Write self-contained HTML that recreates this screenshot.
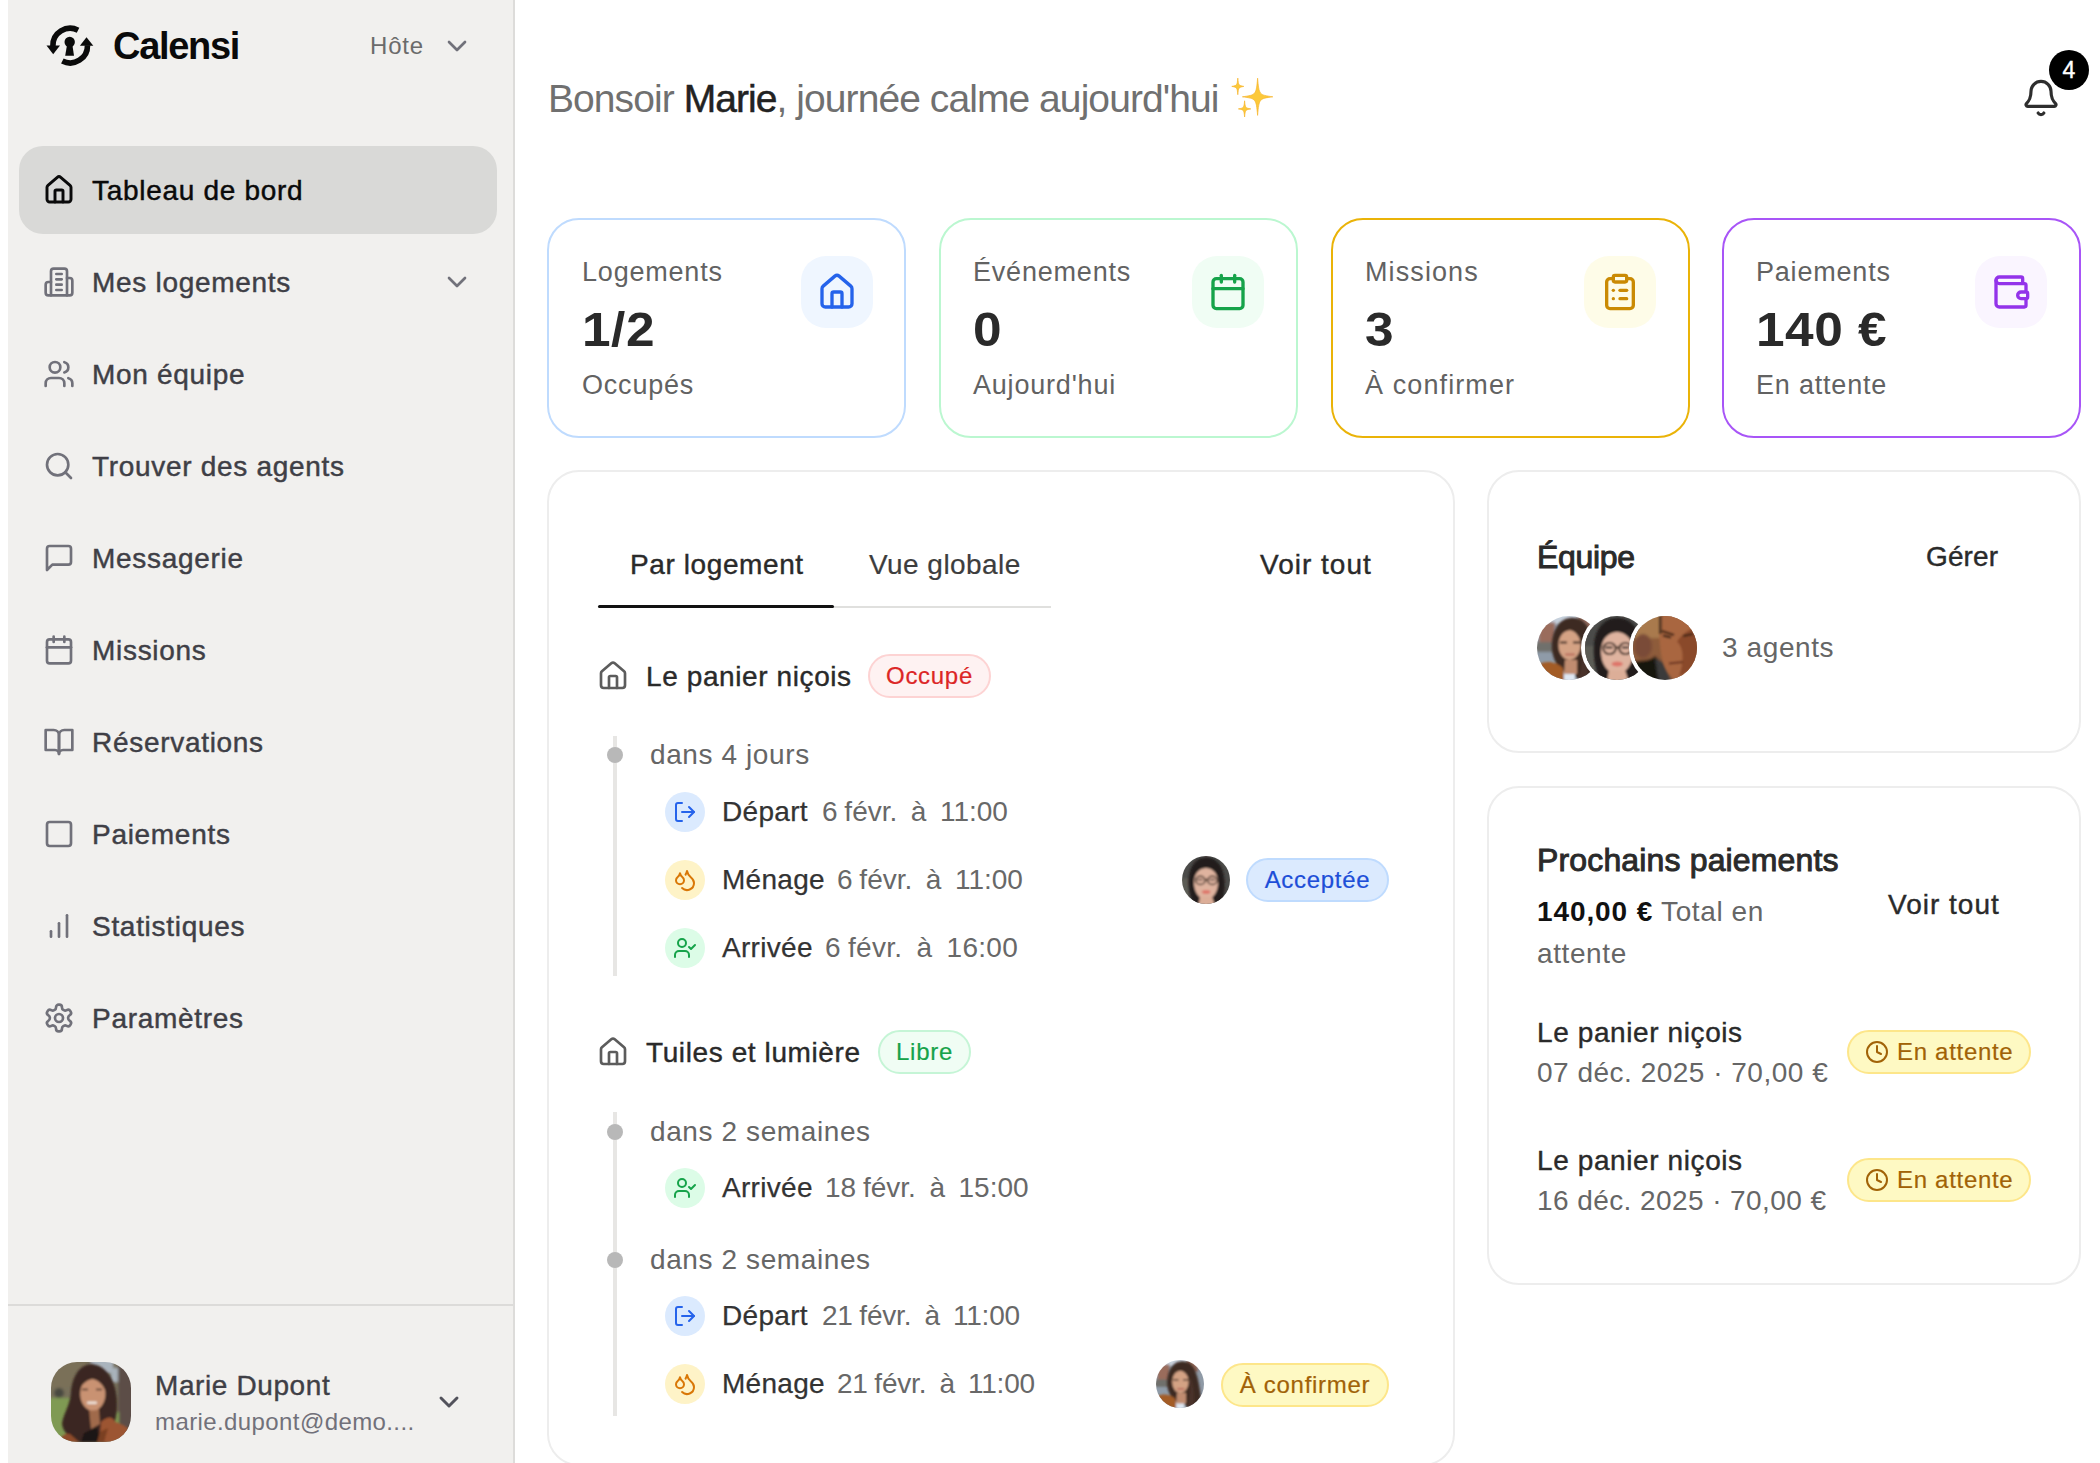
<!DOCTYPE html>
<html lang="fr">
<head>
<meta charset="utf-8">
<title>Calensi</title>
<style>
*{box-sizing:border-box;margin:0;padding:0}
html,body{width:2100px;height:1463px;overflow:hidden;background:#fff}
body{font-family:"Liberation Sans",sans-serif;color:#2b2b2b;position:relative}
.t{position:absolute;white-space:nowrap;line-height:1;transform-origin:0 50%}
.a{position:absolute}
svg{position:absolute;overflow:visible}
.ic{fill:none;stroke-linecap:round;stroke-linejoin:round}
#side{left:8px;top:0;width:507px;height:1463px;background:#f1f0ee;border-right:2px solid #dddcda}
.nav{font-size:28px;color:#3f3f46;left:92px;letter-spacing:.7px;-webkit-text-stroke:.45px currentColor}
.navi{left:43px;width:32px;height:32px;stroke:#71717a;stroke-width:2}
.card{border-radius:32px;border:2px solid #ededed;background:#fff}
.lbl{font-size:27px;color:#626262;letter-spacing:.8px}
.val{font-size:48px;font-weight:bold;color:#2a2a2a;transform:scaleX(1.07);letter-spacing:.5px}
.isq{width:72px;height:72px;border-radius:25px}
.gray{color:#666}
.ev{font-size:28px;color:#333;letter-spacing:.3px;-webkit-text-stroke:.25px currentColor}
.evd{font-size:28px;color:#686868;letter-spacing:0;word-spacing:-1px}
.circ{width:40px;height:40px;border-radius:50%}
.pill{border-radius:22px;height:44px;font-size:24px;letter-spacing:.7px;-webkit-text-stroke:.2px currentColor;line-height:40px;text-align:center;border:2px solid;white-space:nowrap}
.av{border-radius:50%;overflow:hidden}
.tab{font-size:28px;color:#2a2a2a;letter-spacing:.6px;-webkit-text-stroke:.4px currentColor}
.pname{font-size:28px;color:#2a2a2a;letter-spacing:.6px;-webkit-text-stroke:.4px currentColor}
.rel{font-size:28px;color:#666;letter-spacing:.6px}
.h2{font-size:32px;font-weight:normal;color:#2a2a2a;letter-spacing:.15px;-webkit-text-stroke:.95px #2a2a2a}
</style>
</head>
<body>
<!-- AVDEFS-START -->
<svg width="0" height="0" style="position:absolute">
<defs>
  <filter id="bl1" x="-10%" y="-10%" width="120%" height="120%"><feGaussianBlur stdDeviation="1.1"/></filter>
  <filter id="bl2" x="-10%" y="-10%" width="120%" height="120%"><feGaussianBlur stdDeviation="1.6"/></filter>
  <!-- Marie (80x80) -->
  <symbol id="avM" viewBox="0 0 80 80">
    <g filter="url(#bl2)">
      <rect x="-5" y="-5" width="90" height="90" fill="#77705a"/>
      <rect x="-5" y="-5" width="40" height="30" fill="#7a6f58"/>
      <rect x="40" y="-5" width="22" height="16" fill="#aab4bd"/>
      <rect x="60" y="6" width="9" height="14" fill="#a9b3bb"/>
      <rect x="67" y="-5" width="18" height="80" fill="#5b4e47"/>
      <rect x="-5" y="36" width="40" height="40" fill="#7f9a52"/>
      <rect x="60" y="50" width="8" height="18" fill="#7f9a52"/>
      <circle cx="8" cy="31" r="5" fill="#48483f"/>
    </g>
    <g filter="url(#bl1)">
      <path d="M41 2 C28 2 21 16 20 30 C19 44 12 52 11 62 C12 68 15 72 19 74 L28 80 L58 80 C62 66 66 56 66 44 C67 28 60 4 41 2Z" fill="#3b2720"/>
      <path d="M8 80 C10 74 14 71 19 72 L28 80Z" fill="#8f4b2b"/>
      <path d="M38 47 L48 47 L49 62 L40 67Z" fill="#a06a4c"/>
      <ellipse cx="41.8" cy="32" rx="12.6" ry="16.5" fill="#c99272"/>
      <path d="M29 26 C30 14 40 10 46 12 C52 14 56 22 55 30 C52 22 46 17 41 17 C36 18 31 22 29 26Z" fill="#3b2720"/>
      <rect x="36" y="39.4" width="10" height="2.6" rx="1.2" fill="#efe3da"/>
      <path d="M31 27.5h6M45 27.5h6" stroke="#4a3127" stroke-width="1.6"/>
      <path d="M30 80 L33 71 L46 65 L49 80Z" fill="#1c1918"/>
      <path d="M48 80 L50 60 C56 54 62 54 64 60 C72 62 78 66 82 72 L82 82Z" fill="#9c5532"/>
      <path d="M49 70 L57 66 L53 80 L46 80Z" fill="#7a3f22"/>
    </g>
  </symbol>
  <!-- agent A: woman, street background (64x64) -->
  <symbol id="avA" viewBox="0 0 64 64">
    <g filter="url(#bl2)">
      <rect x="-4" y="-4" width="72" height="72" fill="#8f9aa6"/>
      <rect x="-4" y="-4" width="72" height="12" fill="#c6d0dc"/>
      <rect x="2" y="6" width="16" height="22" fill="#9a6c5c"/>
      <rect x="40" y="0" width="16" height="16" fill="#8c6658"/>
      <rect x="-4" y="26" width="22" height="12" fill="#6f706c"/>
      <rect x="-4" y="36" width="26" height="16" fill="#8f9ba8"/>
    </g>
    <g filter="url(#bl1)">
      <path d="M33 2 C22 3 16 14 15 26 C14 36 17 44 21 50 L30 58 L52 66 L60 50 C58 36 56 20 50 10 C46 4 40 1 33 2Z" fill="#3d2b24"/>
      <path d="M2 48 C10 44 20 46 26 52 L27 66 L2 66Z" fill="#a35c28"/>
      <rect x="27" y="56" width="11" height="10" fill="#dfe8f3"/>
      <path d="M28 44 L40 44 L40 58 L27 58Z" fill="#c08c6f"/>
      <ellipse cx="32.5" cy="29" rx="11" ry="15" fill="#d4a284"/>
      <path d="M21 22 C23 10 34 8 40 10 C46 13 47 22 46 30 C43 20 38 15 33 14 C28 15 23 18 21 22Z" fill="#3d2b24"/>
      <path d="M23 26.500h7M36 26.500h7" stroke="#3c2a23" stroke-width="1.8"/>
      <path d="M29 38.500h8" stroke="#b86a5c" stroke-width="2.2" stroke-linecap="round"/>
      <path d="M44 22 C50 30 52 44 50 66 L40 66 C46 52 46 36 44 22Z" fill="#4a3329"/>
    </g>
  </symbol>
  <!-- agent B: glasses, dark background -->
  <symbol id="avB" viewBox="0 0 64 64">
    <g filter="url(#bl2)">
      <rect x="-4" y="-4" width="72" height="72" fill="#4b4b49"/>
      <rect x="-4" y="30" width="14" height="38" fill="#5c5b55"/>
    </g>
    <g filter="url(#bl1)">
      <path d="M32 2 C18 2 10 14 9 30 C8 44 12 56 16 66 L52 66 C56 54 58 42 56 28 C54 12 46 2 32 2Z" fill="#211d1c"/>
      <ellipse cx="32" cy="36" rx="16" ry="22" fill="#dfb39f"/>
      <path d="M15 32 C16 14 25 8 32 8 C40 8 48 14 49 32 C46 21 39 16 32 16 C25 16 18 21 15 32Z" fill="#211d1c"/>
      <path d="M22 66 L24 54 L40 54 L44 66Z" fill="#dcae98"/>
      <g fill="none" stroke="#3a2b22" stroke-width="1.9">
        <ellipse cx="24.500" cy="32.500" rx="6.200" ry="5.600"/>
        <ellipse cx="40.500" cy="32.500" rx="6.200" ry="5.600"/>
        <path d="M30.700 31.500h3.600"/>
      </g>
      <path d="M20.500 31.500h7M37 31.500h7" stroke="#2a2220" stroke-width="1.8"/>
      <ellipse cx="32.200" cy="48" rx="5.600" ry="2.600" fill="#de7469"/>
    </g>
  </symbol>
  <!-- agent C: man, brown -->
  <symbol id="avC" viewBox="0 0 64 64">
    <g filter="url(#bl2)">
      <rect x="-4" y="-4" width="72" height="72" fill="#8e5c3b"/>
      <rect x="-4" y="-4" width="32" height="26" fill="#a97a4e"/>
      <ellipse cx="10" cy="30" rx="9" ry="12" fill="#7a4c38"/>
      <path d="M-4 46 C6 44 16 46 22 40 L30 48 L36 68 L-4 68Z" fill="#18120f"/>
      <path d="M22 42 L30 46 L40 68 L26 68Z" fill="#3a3a3a"/>
    </g>
    <g filter="url(#bl1)">
      <path d="M26 -2 L66 -2 L66 50 C60 60 52 66 42 64 C34 58 30 48 28 38 C26 24 26 10 26 -2Z" fill="#a9663f"/>
      <path d="M44 26 C50 30 52 44 46 60 C54 58 62 50 66 40 L66 10 C58 12 48 18 44 26Z" fill="#8a4a2c"/>
      <path d="M29 15 L41 19" stroke="#3b2216" stroke-width="2.2"/>
      <path d="M30 19.500 L38 21.500" stroke="#2a1a14" stroke-width="2"/>
      <path d="M50 20 L60 18" stroke="#3b2216" stroke-width="2.200"/>
      <path d="M36 47.500 L50 46" stroke="#6a3320" stroke-width="1.800"/>
      <rect x="26" y="-2" width="3" height="20" fill="#5a3a28"/>
    </g>
  </symbol>
  <clipPath id="cp64"><circle cx="32" cy="32" r="32"/></clipPath>
</defs>
</svg>
<!-- AVDEFS-END -->
<div id="side" class="a"></div>
<!-- SIDEBAR-START -->
<!-- logo -->
<svg class="a" style="left:35px;top:10px;width:70px;height:70px" viewBox="35 10 70 70">
  <g fill="none" stroke="#0a0a0a" stroke-width="5.6" stroke-linecap="butt">
    <path d="M52.9 46 A17.3 17.3 0 0 1 78.05 30.2"/>
    <path d="M87.5 45.2 A17.3 17.3 0 0 1 62.35 61"/>
  </g>
  <path d="M46.5 45.6 L60 45.6 L53.2 54.2 Z" fill="#0a0a0a"/>
  <path d="M79.9 45.8 L93.3 45.8 L86.5 37.3 Z" fill="#0a0a0a"/>
  <circle cx="69.7" cy="42" r="5.2" fill="#0a0a0a"/>
  <path d="M67 45 L72.4 45 L74 55.8 L65.2 55.8 Z" fill="#0a0a0a"/>
</svg>
<div class="t" id="brand" style="left:113px;top:26.7px;font-size:38px;font-weight:bold;color:#0a0a0a;letter-spacing:-1.3px">Calensi</div>
<div class="t" id="hote" style="left:370px;top:34px;font-size:24px;color:#6b6b6b;letter-spacing:.8px">Hôte</div>
<svg class="ic" style="left:441px;top:30px;width:32px;height:32px;stroke:#71717a;stroke-width:2" viewBox="0 0 24 24"><path d="m6 9 6 6 6-6"/></svg>

<div class="a" style="left:19px;top:146px;width:478px;height:88px;border-radius:24px;background:#d9d9d7"></div>
<svg class="ic navi" style="top:174px;stroke:#0a0a0a;stroke-width:2.2" viewBox="0 0 24 24"><path d="M15 21v-8a1 1 0 0 0-1-1h-4a1 1 0 0 0-1 1v8"/><path d="M3 10a2 2 0 0 1 .709-1.528l7-5.999a2 2 0 0 1 2.582 0l7 5.999A2 2 0 0 1 21 10v9a2 2 0 0 1-2 2H5a2 2 0 0 1-2-2z"/></svg>
<div class="t nav" id="n1" style="top:177px;color:#0a0a0a">Tableau de bord</div>

<svg class="ic navi" style="top:266px" viewBox="0 0 24 24"><path d="M6 22V4a2 2 0 0 1 2-2h8a2 2 0 0 1 2 2v18Z"/><path d="M6 12H4a2 2 0 0 0-2 2v6a2 2 0 0 0 2 2h2"/><path d="M18 9h2a2 2 0 0 1 2 2v9a2 2 0 0 1-2 2h-2"/><path d="M10 6h4"/><path d="M10 10h4"/><path d="M10 14h4"/><path d="M10 18h4"/></svg>
<div class="t nav" id="n2" style="top:269px">Mes logements</div>
<svg class="ic" style="left:441px;top:266px;width:32px;height:32px;stroke:#71717a;stroke-width:2" viewBox="0 0 24 24"><path d="m6 9 6 6 6-6"/></svg>

<svg class="ic navi" style="top:358px" viewBox="0 0 24 24"><path d="M16 21v-2a4 4 0 0 0-4-4H6a4 4 0 0 0-4 4v2"/><circle cx="9" cy="7" r="4"/><path d="M22 21v-2a4 4 0 0 0-3-3.87"/><path d="M16 3.13a4 4 0 0 1 0 7.75"/></svg>
<div class="t nav" id="n3" style="top:361px">Mon équipe</div>

<svg class="ic navi" style="top:450px" viewBox="0 0 24 24"><circle cx="11" cy="11" r="8"/><path d="m21 21-4.3-4.3"/></svg>
<div class="t nav" id="n4" style="top:453px">Trouver des agents</div>

<svg class="ic navi" style="top:542px" viewBox="0 0 24 24"><path d="M21 15a2 2 0 0 1-2 2H7l-4 4V5a2 2 0 0 1 2-2h14a2 2 0 0 1 2 2z"/></svg>
<div class="t nav" id="n5" style="top:545px">Messagerie</div>

<svg class="ic navi" style="top:634px" viewBox="0 0 24 24"><path d="M8 2v4"/><path d="M16 2v4"/><rect width="18" height="18" x="3" y="4" rx="2"/><path d="M3 10h18"/></svg>
<div class="t nav" id="n6" style="top:637px">Missions</div>

<svg class="ic navi" style="top:726px" viewBox="0 0 24 24"><path d="M2 3h6a4 4 0 0 1 4 4v14a3 3 0 0 0-3-3H2z"/><path d="M22 3h-6a4 4 0 0 0-4 4v14a3 3 0 0 1 3-3h7z"/></svg>
<div class="t nav" id="n7" style="top:729px">Réservations</div>

<svg class="ic navi" style="top:818px" viewBox="0 0 24 24"><rect width="18" height="18" x="3" y="3" rx="2"/></svg>
<div class="t nav" id="n8" style="top:821px">Paiements</div>

<svg class="ic navi" style="top:910px" viewBox="0 0 24 24"><path d="M12 20V10"/><path d="M18 20V4"/><path d="M6 20v-4"/></svg>
<div class="t nav" id="n9" style="top:913px">Statistiques</div>

<svg class="ic navi" style="top:1002px" viewBox="0 0 24 24"><path d="M12.22 2h-.44a2 2 0 0 0-2 2v.18a2 2 0 0 1-1 1.73l-.43.25a2 2 0 0 1-2 0l-.15-.08a2 2 0 0 0-2.73.73l-.22.38a2 2 0 0 0 .73 2.73l.15.1a2 2 0 0 1 1 1.72v.51a2 2 0 0 1-1 1.74l-.15.09a2 2 0 0 0-.73 2.73l.22.38a2 2 0 0 0 2.73.73l.15-.08a2 2 0 0 1 2 0l.43.25a2 2 0 0 1 1 1.73V20a2 2 0 0 0 2 2h.44a2 2 0 0 0 2-2v-.18a2 2 0 0 1 1-1.73l.43-.25a2 2 0 0 1 2 0l.15.08a2 2 0 0 0 2.73-.73l.22-.39a2 2 0 0 0-.73-2.73l-.15-.08a2 2 0 0 1-1-1.74v-.5a2 2 0 0 1 1-1.74l.15-.09a2 2 0 0 0 .73-2.73l-.22-.38a2 2 0 0 0-2.73-.73l-.15.08a2 2 0 0 1-2 0l-.43-.25a2 2 0 0 1-1-1.73V4a2 2 0 0 0-2-2z"/><circle cx="12" cy="12" r="3"/></svg>
<div class="t nav" id="n10" style="top:1005px">Paramètres</div>

<div class="a" style="left:8px;top:1304px;width:505px;height:2px;background:#dcdbd9"></div>
<!-- user avatar -->
<div class="a" style="left:51px;top:1362px;width:80px;height:80px;border-radius:26px;overflow:hidden"><svg style="left:0;top:0;width:80px;height:80px"><use href="#avM"/></svg></div>
<div class="t" id="uname" style="left:155px;top:1372px;font-size:28px;color:#3f3f46;letter-spacing:.6px;-webkit-text-stroke:.4px currentColor">Marie Dupont</div>
<div class="t" id="umail" style="left:155px;top:1410px;font-size:24px;color:#71717a;letter-spacing:.4px">marie.dupont@demo....</div>
<svg class="ic" style="left:433px;top:1386px;width:32px;height:32px;stroke:#52525b;stroke-width:2.2" viewBox="0 0 24 24"><path d="m6 9 6 6 6-6"/></svg>
<!-- SIDEBAR-END -->
<!-- MAIN1-START -->
<!-- greeting -->
<div class="t" id="greet" style="left:548px;top:79px;font-size:39px;color:#707070;letter-spacing:-.93px">Bonsoir <span style="color:#222;-webkit-text-stroke:.5px #222">Marie</span>, journée calme aujourd'hui</div>
<svg class="a" aria-label="sparkles" style="left:1225px;top:70px;width:55px;height:55px" viewBox="1225 70 55 55"><path d="M1257.6 78.2 C1259.1 94.9 1259.1 94.9 1272.8 96.8 C1259.1 98.7 1259.1 98.7 1257.6 115.4 C1256.1 98.7 1256.1 98.7 1242.4 96.8 C1256.1 94.9 1256.1 94.9 1257.6 78.2Z" fill="#fcc93a" stroke="#f7b52c" stroke-width=".7" stroke-linejoin="round"/><path d="M1237.8 78.1 C1238.5 85.4 1238.5 85.4 1243.8 86.4 C1238.5 87.4 1238.5 87.4 1237.8 94.7 C1237.1 87.4 1237.1 87.4 1231.8 86.4 C1237.1 85.4 1237.1 85.4 1237.8 78.1Z" fill="#fcc93a" stroke="#f7b52c" stroke-width=".7" stroke-linejoin="round"/><path d="M1244.6 100.8 C1245.3 107.9 1245.3 107.9 1250.8 108.9 C1245.3 109.9 1245.3 109.9 1244.6 117.0 C1243.9 109.9 1243.9 109.9 1238.4 108.9 C1243.9 107.9 1243.9 107.9 1244.6 100.8Z" fill="#fcc93a" stroke="#f7b52c" stroke-width=".7" stroke-linejoin="round"/></svg>
<!-- bell -->
<svg class="ic" style="left:2021px;top:78px;width:40px;height:40px;stroke:#2e2e2e;stroke-width:1.9" viewBox="0 0 24 24"><path d="M10.268 21a2 2 0 0 0 3.464 0"/><path d="M3.262 15.326A1 1 0 0 0 4 17h16a1 1 0 0 0 .74-1.673C19.41 13.956 18 12.499 18 8A6 6 0 0 0 6 8c0 4.499-1.411 5.956-2.738 7.326"/></svg>
<div class="a" style="left:2049px;top:50px;width:40px;height:40px;border-radius:50%;background:#000"></div>
<div class="t" id="badge4" style="left:2049px;top:59px;width:40px;text-align:center;font-size:23px;-webkit-text-stroke:.4px #fff;color:#fff">4</div>

<!-- stat cards -->
<div class="a card" style="left:547px;top:218px;width:359px;height:220px;border-color:#bfdbfe"></div>
<div class="t lbl" id="s1l" style="left:582px;top:259px">Logements</div>
<div class="t val" id="s1v" style="left:582px;top:306px">1/2</div>
<div class="t lbl" id="s1s" style="left:582px;top:372px">Occupés</div>
<div class="a isq" style="left:801px;top:256px;background:#eff6ff"></div>
<svg class="ic" style="left:817px;top:272px;width:40px;height:40px;stroke:#2563eb;stroke-width:2" viewBox="0 0 24 24"><path d="M15 21v-8a1 1 0 0 0-1-1h-4a1 1 0 0 0-1 1v8"/><path d="M3 10a2 2 0 0 1 .709-1.528l7-5.999a2 2 0 0 1 2.582 0l7 5.999A2 2 0 0 1 21 10v9a2 2 0 0 1-2 2H5a2 2 0 0 1-2-2z"/></svg>

<div class="a card" style="left:939px;top:218px;width:359px;height:220px;border-color:#bbf7d0"></div>
<div class="t lbl" id="s2l" style="left:973px;top:259px">Événements</div>
<div class="t val" id="s2v" style="left:973px;top:306px">0</div>
<div class="t lbl" id="s2s" style="left:973px;top:372px">Aujourd'hui</div>
<div class="a isq" style="left:1192px;top:256px;background:#f0fdf4"></div>
<svg class="ic" style="left:1208px;top:272px;width:40px;height:40px;stroke:#16a34a;stroke-width:2" viewBox="0 0 24 24"><path d="M8 2v4"/><path d="M16 2v4"/><rect width="18" height="18" x="3" y="4" rx="2"/><path d="M3 10h18"/></svg>

<div class="a card" style="left:1331px;top:218px;width:359px;height:220px;border-color:#eab308"></div>
<div class="t lbl" id="s3l" style="letter-spacing:1.1px;left:1365px;top:259px">Missions</div>
<div class="t val" id="s3v" style="left:1365px;top:306px">3</div>
<div class="t lbl" id="s3s" style="letter-spacing:1.1px;left:1365px;top:372px">À confirmer</div>
<div class="a isq" style="left:1584px;top:256px;background:#fefce8"></div>
<svg class="ic" style="left:1600px;top:272px;width:40px;height:40px;stroke:#ca8a04;stroke-width:2" viewBox="0 0 24 24"><rect width="8" height="4" x="8" y="2" rx="1" ry="1"/><path d="M16 4h2a2 2 0 0 1 2 2v14a2 2 0 0 1-2 2H6a2 2 0 0 1-2-2V6a2 2 0 0 1 2-2h2"/><path d="M12 11h4"/><path d="M12 16h4"/><path d="M8 11h.01"/><path d="M8 16h.01"/></svg>

<div class="a card" style="left:1722px;top:218px;width:359px;height:220px;border-color:#a855f7"></div>
<div class="t lbl" id="s4l" style="left:1756px;top:259px">Paiements</div>
<div class="t val" id="s4v" style="left:1756px;top:306px">140 €</div>
<div class="t lbl" id="s4s" style="left:1756px;top:372px">En attente</div>
<div class="a isq" style="left:1975px;top:256px;background:#faf5ff"></div>
<svg class="ic" style="left:1991px;top:272px;width:40px;height:40px;stroke:#9333ea;stroke-width:2" viewBox="0 0 24 24"><path d="M19 7V4a1 1 0 0 0-1-1H5a2 2 0 0 0 0 4h15a1 1 0 0 1 1 1v4h-3a2 2 0 0 0 0 4h3a1 1 0 0 0 1-1v-2a1 1 0 0 0-1-1"/><path d="M3 5v14a2 2 0 0 0 2 2h15a1 1 0 0 0 1-1v-4"/></svg>
<!-- MAIN1-END -->
<!-- MAIN2-START -->
<div class="a card" style="left:547px;top:470px;width:908px;height:996px"></div>
<div class="t tab" id="tab1" style="left:630px;top:551.3px">Par logement</div>
<div class="t tab" id="tab2" style="color:#3d3d3d;-webkit-text-stroke:.2px #3d3d3d;letter-spacing:.45px;left:869px;top:551.3px">Vue globale</div>
<div class="a" style="left:598px;top:606px;width:453px;height:2px;background:#e0e0de"></div>
<div class="a" style="left:598px;top:605px;width:236px;height:3px;background:#111;border-radius:2px"></div>
<div class="t tab" id="voir1" style="letter-spacing:1px;left:1260px;top:551.3px">Voir tout</div>
<svg class="ic" style="left:597px;top:660px;width:32px;height:32px;stroke:#5c5c5c;stroke-width:2" viewBox="0 0 24 24"><path d="M15 21v-8a1 1 0 0 0-1-1h-4a1 1 0 0 0-1 1v8"/><path d="M3 10a2 2 0 0 1 .709-1.528l7-5.999a2 2 0 0 1 2.582 0l7 5.999A2 2 0 0 1 21 10v9a2 2 0 0 1-2 2H5a2 2 0 0 1-2-2z"/></svg>
<div class="t pname" id="p1" style="left:646px;top:662.8px">Le panier niçois</div>
<div class="a pill" id="b1" style="left:868px;top:654px;width:123px;color:#dc2626;background:#fef2f2;border-color:#fdd3d3">Occupé</div>
<div class="a" style="left:613px;top:736px;width:4px;height:240px;background:#e7e6e4"></div>
<div class="a" style="left:607px;top:747px;width:16px;height:16px;border-radius:50%;background:#b8b8b8"></div>
<div class="t rel" id="r1" style="left:650px;top:741.3px">dans 4 jours</div>
<div class="a circ" style="left:665px;top:792px;background:#dbeafe"></div>
<svg class="ic" style="left:673px;top:800px;width:24px;height:24px;stroke:#2563eb;stroke-width:2" viewBox="0 0 24 24"><path d="M9 21H5a2 2 0 0 1-2-2V5a2 2 0 0 1 2-2h4"/><polyline points="16 17 21 12 16 7"/><line x1="21" x2="9" y1="12" y2="12"/></svg>
<div class="t ev" id="e1l" style="left:722px;top:798.3px">Départ</div>
<div class="t evd" id="e1d" style="left:822px;top:798.3px;letter-spacing:0px">6 févr.&nbsp; à&nbsp; 11:00</div>
<div class="a circ" style="left:665px;top:860px;background:#fef3c7"></div>
<svg class="ic" style="left:673px;top:868px;width:24px;height:24px;stroke:#d97706;stroke-width:2" viewBox="0 0 24 24"><path d="M7 16.3c2.2 0 4-1.83 4-4.05 0-1.16-.57-2.26-1.71-3.19S7.29 6.75 7 5.3c-.29 1.45-1.14 2.84-2.29 3.76S3 11.1 3 12.25c0 2.22 1.8 4.05 4 4.05z"/><path d="M12.56 6.6A10.97 10.97 0 0 0 14 3.02c.5 2.5 2 4.9 4 6.5s3 3.500 3 5.5a6.98 6.98 0 0 1-11.91 4.97"/></svg>
<div class="t ev" id="e2l" style="left:722px;top:866.3px">Ménage</div>
<div class="t evd" id="e2d" style="left:837px;top:866.3px;letter-spacing:0px">6 févr.&nbsp; à&nbsp; 11:00</div>
<div class="a circ" style="left:665px;top:928px;background:#dcfce7"></div>
<svg class="ic" style="left:673px;top:936px;width:24px;height:24px;stroke:#16a34a;stroke-width:2" viewBox="0 0 24 24"><path d="M16 21v-2a4 4 0 0 0-4-4H6a4 4 0 0 0-4 4v2"/><circle cx="9" cy="7" r="4"/><polyline points="16 11 18 13 22 9"/></svg>
<div class="t ev" id="e3l" style="left:722px;top:934.3px">Arrivée</div>
<div class="t evd" id="e3d" style="left:825px;top:934.3px;letter-spacing:.3px">6 févr.&nbsp; à&nbsp; 16:00</div>
<div class="a av" style="left:1182px;top:856px;width:48px;height:48px;"><svg style="left:0;top:0;width:48px;height:48px"><use href="#avB"/></svg></div>
<div class="a pill" id="b2" style="left:1246px;top:858px;width:143px;color:#1d4ed8;background:#dbeafe;border-color:#bfdbfe">Acceptée</div>
<svg class="ic" style="left:597px;top:1036px;width:32px;height:32px;stroke:#5c5c5c;stroke-width:2" viewBox="0 0 24 24"><path d="M15 21v-8a1 1 0 0 0-1-1h-4a1 1 0 0 0-1 1v8"/><path d="M3 10a2 2 0 0 1 .709-1.528l7-5.999a2 2 0 0 1 2.582 0l7 5.999A2 2 0 0 1 21 10v9a2 2 0 0 1-2 2H5a2 2 0 0 1-2-2z"/></svg>
<div class="t pname" id="p2" style="left:646px;top:1038.8px">Tuiles et lumière</div>
<div class="a pill" id="b3" style="left:878px;top:1030px;width:93px;color:#16a34a;background:#f0fdf4;border-color:#c5f5d6">Libre</div>
<div class="a" style="left:613px;top:1112px;width:4px;height:304px;background:#e7e6e4"></div>
<div class="a" style="left:607px;top:1124px;width:16px;height:16px;border-radius:50%;background:#b8b8b8"></div>
<div class="t rel" id="r2" style="left:650px;top:1118.3px">dans 2 semaines</div>
<div class="a circ" style="left:665px;top:1168px;background:#dcfce7"></div>
<svg class="ic" style="left:673px;top:1176px;width:24px;height:24px;stroke:#16a34a;stroke-width:2" viewBox="0 0 24 24"><path d="M16 21v-2a4 4 0 0 0-4-4H6a4 4 0 0 0-4 4v2"/><circle cx="9" cy="7" r="4"/><polyline points="16 11 18 13 22 9"/></svg>
<div class="t ev" id="e4l" style="left:722px;top:1174.3px">Arrivée</div>
<div class="t evd" id="e4d" style="left:825px;top:1174.3px;letter-spacing:0px">18 févr.&nbsp; à&nbsp; 15:00</div>
<div class="a" style="left:607px;top:1252px;width:16px;height:16px;border-radius:50%;background:#b8b8b8"></div>
<div class="t rel" id="r3" style="left:650px;top:1246.3px">dans 2 semaines</div>
<div class="a circ" style="left:665px;top:1296px;background:#dbeafe"></div>
<svg class="ic" style="left:673px;top:1304px;width:24px;height:24px;stroke:#2563eb;stroke-width:2" viewBox="0 0 24 24"><path d="M9 21H5a2 2 0 0 1-2-2V5a2 2 0 0 1 2-2h4"/><polyline points="16 17 21 12 16 7"/><line x1="21" x2="9" y1="12" y2="12"/></svg>
<div class="t ev" id="e5l" style="left:722px;top:1302.3px">Départ</div>
<div class="t evd" id="e5d" style="left:822px;top:1302.3px;letter-spacing:-.2px">21 févr.&nbsp; à&nbsp; 11:00</div>
<div class="a circ" style="left:665px;top:1364px;background:#fef3c7"></div>
<svg class="ic" style="left:673px;top:1372px;width:24px;height:24px;stroke:#d97706;stroke-width:2" viewBox="0 0 24 24"><path d="M7 16.3c2.2 0 4-1.83 4-4.05 0-1.16-.57-2.26-1.71-3.19S7.29 6.75 7 5.3c-.29 1.45-1.14 2.84-2.29 3.76S3 11.1 3 12.25c0 2.22 1.8 4.05 4 4.05z"/><path d="M12.56 6.6A10.97 10.97 0 0 0 14 3.02c.5 2.5 2 4.9 4 6.5s3 3.500 3 5.5a6.98 6.98 0 0 1-11.91 4.97"/></svg>
<div class="t ev" id="e6l" style="left:722px;top:1370.3px">Ménage</div>
<div class="t evd" id="e6d" style="left:837px;top:1370.3px;letter-spacing:-.2px">21 févr.&nbsp; à&nbsp; 11:00</div>
<div class="a av" style="left:1156px;top:1360px;width:48px;height:48px;"><svg style="left:0;top:0;width:48px;height:48px"><use href="#avA"/></svg></div>
<div class="a pill" id="b4" style="left:1221px;top:1363px;width:168px;color:#a16207;background:#fef9c3;border-color:#fde68a">À confirmer</div>
<div class="a card" style="left:1487px;top:470px;width:594px;height:283px"></div>
<div class="t h2" id="eq" style="letter-spacing:-.3px;left:1537px;top:541.4px">Équipe</div>
<div class="t tab" id="gerer" style="letter-spacing:.1px;left:1926px;top:543.3px">Gérer</div>
<div class="a av" style="left:1537px;top:616px;width:64px;height:64px;box-shadow:0 0 0 4px #fff;"><svg style="left:0;top:0;width:64px;height:64px"><use href="#avA"/></svg></div>
<div class="a av" style="left:1585px;top:616px;width:64px;height:64px;box-shadow:0 0 0 4px #fff;"><svg style="left:0;top:0;width:64px;height:64px"><use href="#avB"/></svg></div>
<div class="a av" style="left:1633px;top:616px;width:64px;height:64px;box-shadow:0 0 0 4px #fff;"><svg style="left:0;top:0;width:64px;height:64px"><use href="#avC"/></svg></div>
<div class="t" id="ag" style="left:1722px;top:634.3px;font-size:28px;color:#666;letter-spacing:.6px">3 agents</div>
<div class="a card" style="left:1487px;top:786px;width:594px;height:499px"></div>
<div class="t h2" id="pp" style="left:1537px;top:844.4px">Prochains paiements</div>
<div class="t" id="tot" style="left:1537px;top:898.3px;font-size:28px;color:#666;letter-spacing:.6px"><b id="totb" style="color:#111;letter-spacing:.9px">140,00 €</b> Total en</div>
<div class="t" id="att" style="left:1537px;top:939.6px;font-size:28px;color:#666;letter-spacing:.6px">attente</div>
<div class="t tab" id="voir2" style="letter-spacing:1px;left:1888px;top:890.7px">Voir tout</div>
<div class="t pname" id="q1n" style="left:1537px;top:1018.9px">Le panier niçois</div>
<div class="t" id="q1d" style="left:1537px;top:1058.7px;font-size:28px;color:#666;letter-spacing:.5px">07 déc. 2025 · 70,00 €</div>
<div class="a pill" style="left:1847px;top:1030px;width:184px;color:#a16207;background:#fef9c3;border-color:#fde68a;text-align:left;padding-left:48px" id="q1b">En attente</div>
<svg class="ic" style="left:1865px;top:1040px;width:24px;height:24px;stroke:#a16207;stroke-width:2" viewBox="0 0 24 24"><circle cx="12" cy="12" r="10"/><polyline points="12 6 12 12 16 14"/></svg>
<div class="t pname" id="q2n" style="left:1537px;top:1146.9px">Le panier niçois</div>
<div class="t" id="q2d" style="left:1537px;top:1186.7px;font-size:28px;color:#666;letter-spacing:.42px">16 déc. 2025 · 70,00 €</div>
<div class="a pill" style="left:1847px;top:1158px;width:184px;color:#a16207;background:#fef9c3;border-color:#fde68a;text-align:left;padding-left:48px" id="q2b">En attente</div>
<svg class="ic" style="left:1865px;top:1168px;width:24px;height:24px;stroke:#a16207;stroke-width:2" viewBox="0 0 24 24"><circle cx="12" cy="12" r="10"/><polyline points="12 6 12 12 16 14"/></svg>
<!-- MAIN2-END -->
</body>
</html>
